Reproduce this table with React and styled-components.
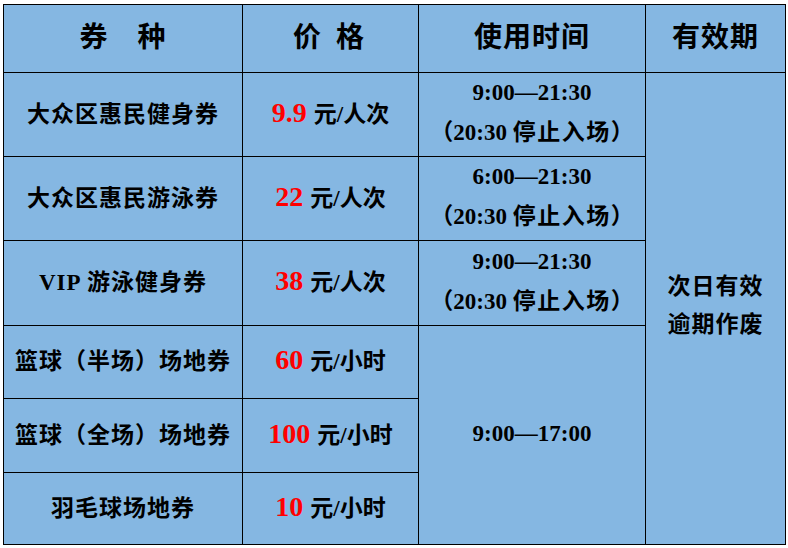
import React from "react";
import styled, { createGlobalStyle } from "styled-components";

const GlobalStyle = createGlobalStyle`
  body {
    margin: 4px 0 0 3px;
    background: #ffffff;
    font-family: "Liberation Serif", "Noto Sans CJK SC", serif;
  }
`;

const tickets = [
  { name: "大众区惠民健身券", price: "9.9", unit: "元/人次" },
  { name: "大众区惠民游泳券", price: "22", unit: "元/人次" },
  { name: "VIP 游泳健身券", price: "38", unit: "元/人次" },
  { name: "篮球（半场）场地券", price: "60", unit: "元/小时" },
  { name: "篮球（全场）场地券", price: "100", unit: "元/小时" },
  { name: "羽毛球场地券", price: "10", unit: "元/小时" },
];

const rowHeights = [84, 84, 85, 73, 74, 72];

const App = () => {
  return (
    <>
      <GlobalStyle />
      <Table>
        <colgroup>
          <col style={{ width: 239 }} />
          <col style={{ width: 176 }} />
          <col style={{ width: 227 }} />
          <col style={{ width: 140 }} />
        </colgroup>
        <thead>
          <Row $h={68}>
            <Head>券　种</Head>
            <Head $spread>价 格</Head>
            <Head>使用时间</Head>
            <Head>有效期</Head>
          </Row>
        </thead>
        <tbody>
          {tickets.map((t, i) => (
            <Row key={i} $h={rowHeights[i]}>
              <NameCell>{t.name}</NameCell>
              <Cell>
                <Price>{t.price}</Price>
                <Unit>{t.unit}</Unit>
              </Cell>
              {i < 3 && (
                <TimeCell>
                  <TimeLine>{i === 1 ? "6:00—21:30" : "9:00—21:30"}</TimeLine>
                  <TimeLine>
                    （20:30 <Spaced>停止入场</Spaced>）
                  </TimeLine>
                </TimeCell>
              )}
              {i === 3 && (
                <TimeCell rowSpan={3}>
                  <TimeLine>9:00—17:00</TimeLine>
                </TimeCell>
              )}
              {i === 0 && (
                <ValidCell rowSpan={6}>
                  <ValidLine>次日有效</ValidLine>
                  <ValidLine>逾期作废</ValidLine>
                </ValidCell>
              )}
            </Row>
          ))}
        </tbody>
      </Table>
    </>
  );
};

export default App;

const Table = styled.table`
  border-collapse: collapse;
  table-layout: fixed;
  width: 782px;
  background-color: #85b7e2;
  color: #000000;
`;

const Row = styled.tr`
  height: ${p => p.$h}px;
`;

const Head = styled.th`
  border: 1px solid #000;
  padding: 0 0 8px;
  font-size: 28px;
  font-weight: 700;
  text-align: center;
  vertical-align: middle;
  letter-spacing: ${p => (p.$spread ? "4px" : "1px")};
`;

const Cell = styled.td`
  border: 1px solid #000;
  padding: 0 0 6px;
  text-align: center;
  vertical-align: middle;
  font-weight: 700;
  white-space: nowrap;
`;

const NameCell = styled(Cell)`
  font-size: 23px;
  letter-spacing: 1px;
`;

const Price = styled.span`
  color: #ff0000;
  font-size: 28px;
  margin-right: 7px;
`;

const Unit = styled.span`
  font-size: 23px;
`;

const TimeCell = styled(Cell)`
  font-size: 23px;
  padding: 0 0 3px;
`;

const TimeLine = styled.div`
  line-height: 40px;
`;

const Spaced = styled.span`
  letter-spacing: 1.5px;
`;

const ValidCell = styled(Cell)`
  font-size: 23px;
  letter-spacing: 1px;
`;

const ValidLine = styled.div`
  line-height: 38px;
`;
